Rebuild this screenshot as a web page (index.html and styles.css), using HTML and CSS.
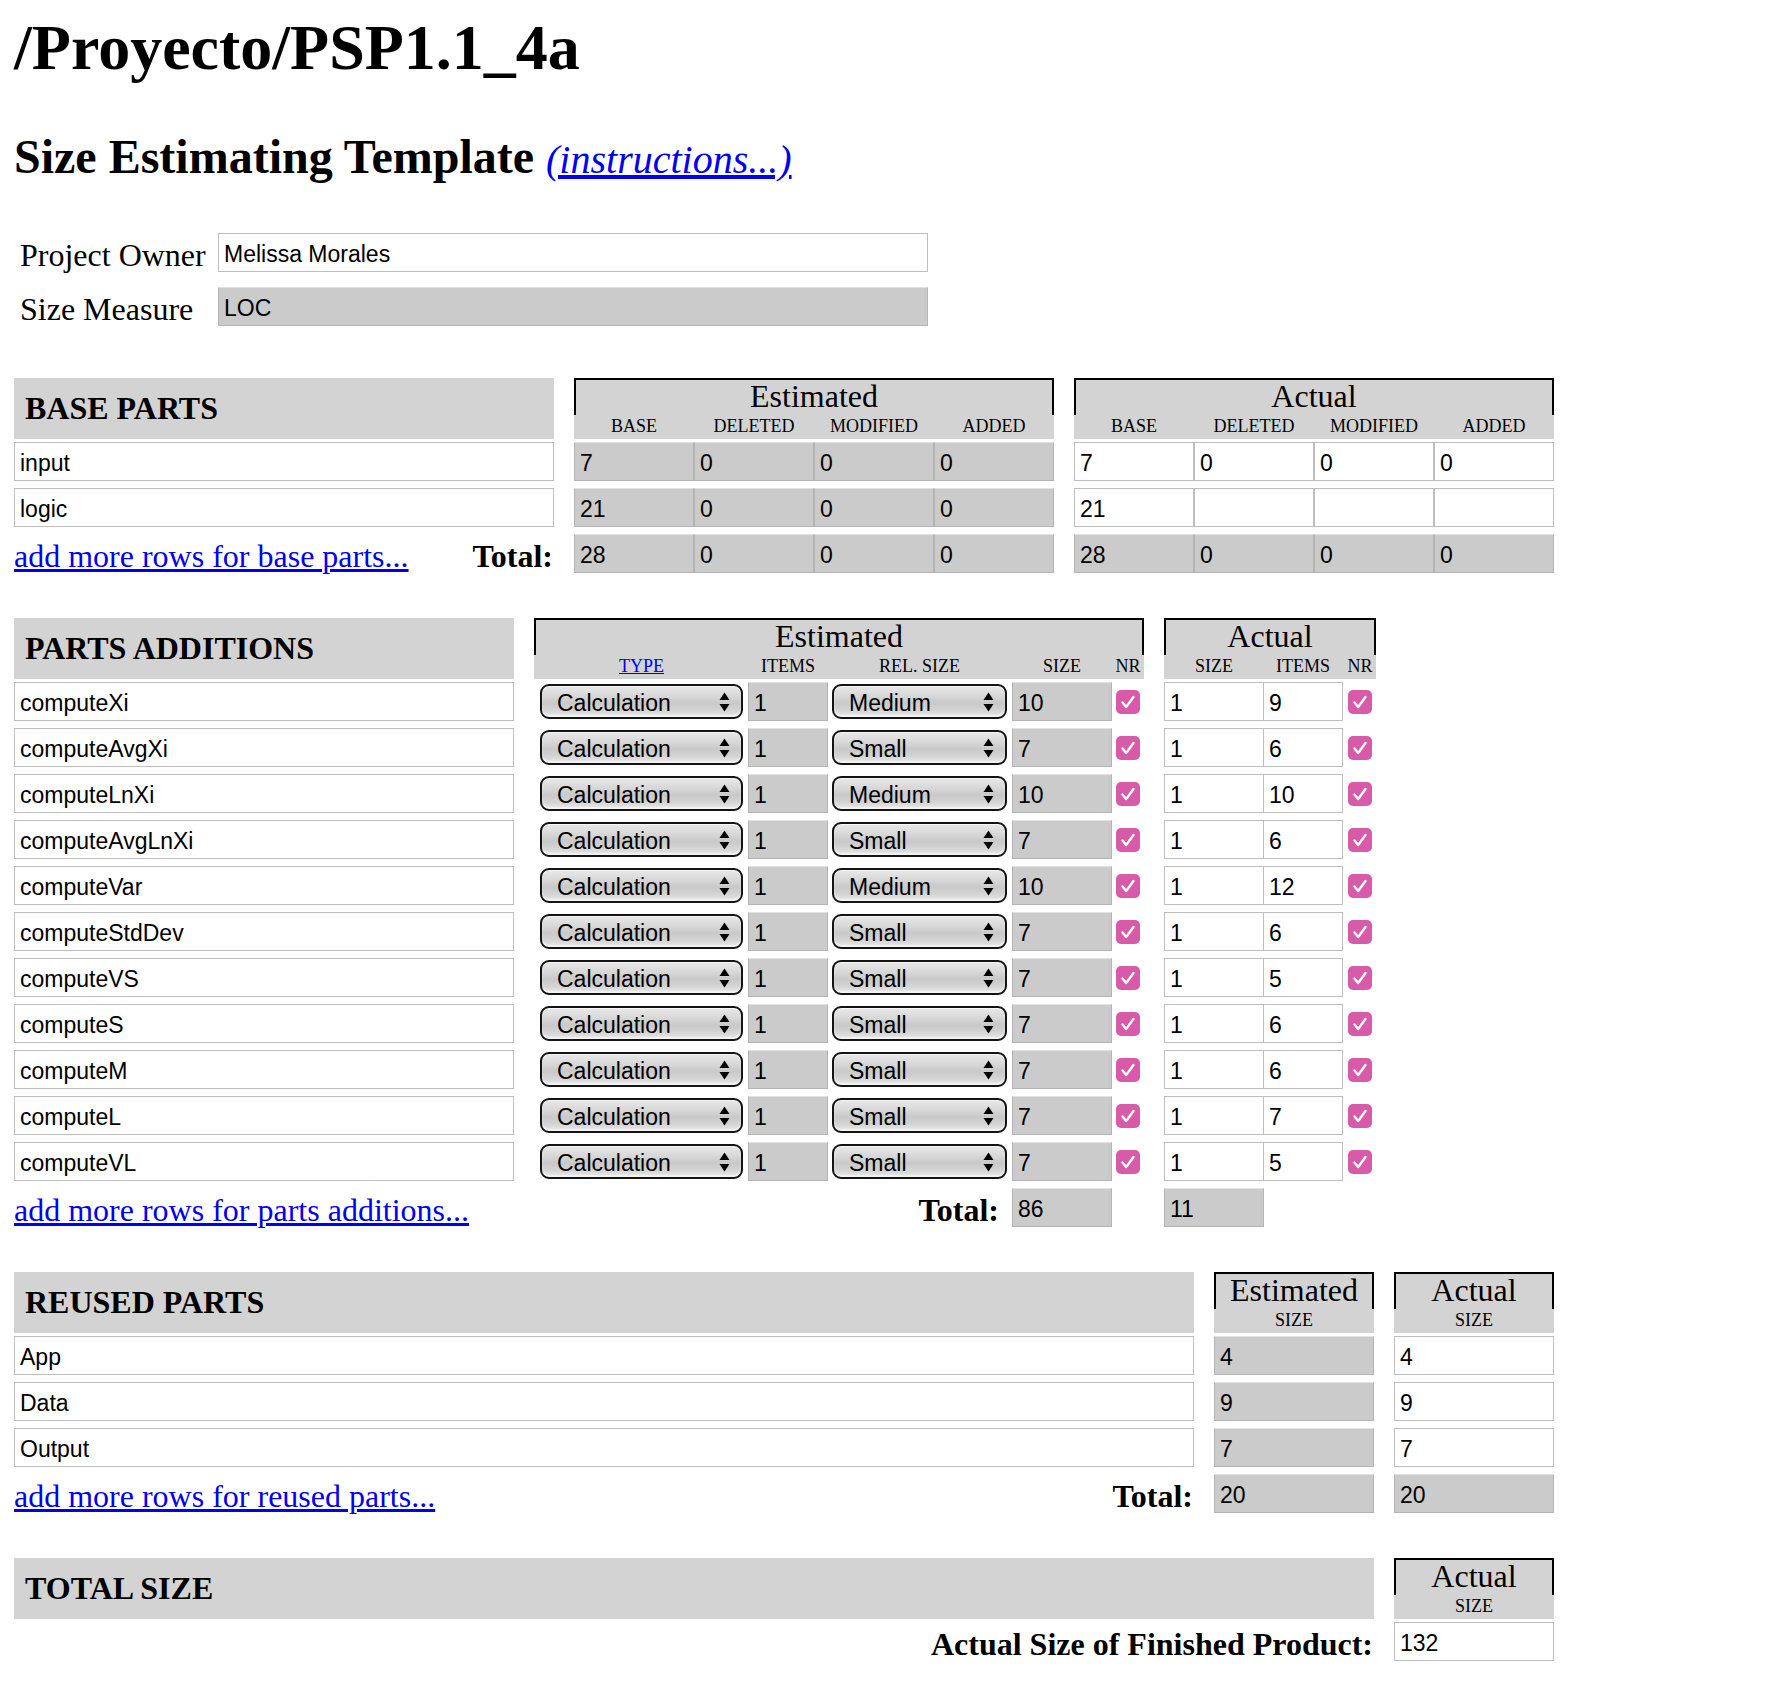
FILE: index.html
```html
<!DOCTYPE html>
<html>
<head>
<meta charset="utf-8">
<title>Size Estimating Template</title>
<link rel="stylesheet" href="styles.css">
</head>
<body>
<h1 class="title">/Proyecto/PSP1.1_4a</h1>
<h2 class="subtitle">Size Estimating Template <a href="#" class="instr">(instructions...)</a></h2>

<div class="owner">
  <div class="olabel">Project Owner</div><div class="inp">Melissa Morales</div>
  <div class="olabel">Size Measure</div><div class="inp ro">LOC</div>
</div>

<!-- BASE PARTS -->
<section class="sec first">
  <div class="hrow">
    <div class="sechead w-base">BASE PARTS</div>
    <div class="grp w480">
      <div class="gtitle">Estimated</div>
      <div class="gsub"><span class="c120">BASE</span><span class="c120">DELETED</span><span class="c120">MODIFIED</span><span class="c120">ADDED</span></div>
    </div>
    <div class="grp w480">
      <div class="gtitle">Actual</div>
      <div class="gsub"><span class="c120">BASE</span><span class="c120">DELETED</span><span class="c120">MODIFIED</span><span class="c120">ADDED</span></div>
    </div>
  </div>
  <div class="rows">
    <div class="drow">
      <div class="inp w-base">input</div>
      <div class="cells w480"><div class="inp ro c120">7</div><div class="inp ro c120">0</div><div class="inp ro c120">0</div><div class="inp ro c120">0</div></div>
      <div class="cells w480"><div class="inp c120">7</div><div class="inp c120">0</div><div class="inp c120">0</div><div class="inp c120">0</div></div>
    </div>
    <div class="drow">
      <div class="inp w-base">logic</div>
      <div class="cells w480"><div class="inp ro c120">21</div><div class="inp ro c120">0</div><div class="inp ro c120">0</div><div class="inp ro c120">0</div></div>
      <div class="cells w480"><div class="inp c120">21</div><div class="inp c120"></div><div class="inp c120"></div><div class="inp c120"></div></div>
    </div>
    <div class="drow">
      <div class="totlabel w-base"><a href="#">add more rows for base parts...</a><b>Total:</b></div>
      <div class="cells w480"><div class="inp ro c120">28</div><div class="inp ro c120">0</div><div class="inp ro c120">0</div><div class="inp ro c120">0</div></div>
      <div class="cells w480"><div class="inp ro c120">28</div><div class="inp ro c120">0</div><div class="inp ro c120">0</div><div class="inp ro c120">0</div></div>
    </div>
  </div>
</section>

<!-- PARTS ADDITIONS -->
<section class="sec">
  <div class="hrow">
    <div class="sechead w-add">PARTS ADDITIONS</div>
    <div class="grp w610">
      <div class="gtitle">Estimated</div>
      <div class="gsub pe"><span class="pe-type"><a href="#">TYPE</a></span><span class="pe-items">ITEMS</span><span class="pe-rel">REL. SIZE</span><span class="pe-size">SIZE</span><span class="pe-nr">NR</span></div>
    </div>
    <div class="grp w212">
      <div class="gtitle">Actual</div>
      <div class="gsub"><span class="pa-size">SIZE</span><span class="pa-items">ITEMS</span><span class="pa-nr">NR</span></div>
    </div>
  </div>
  <div class="rows">
    <div class="drow"><div class="inp w-add">computeXi</div>
      <div class="cells pe w610"><div class="sel pe-type"><span>Calculation</span><svg class="arr" viewBox="0 0 11 20"><path d="M0.5 8 L5.5 0.5 L10.5 8 Z M0.5 12 L5.5 19.5 L10.5 12 Z"/></svg></div><div class="inp ro pe-items">1</div><div class="sel pe-rel"><span>Medium</span><svg class="arr" viewBox="0 0 11 20"><path d="M0.5 8 L5.5 0.5 L10.5 8 Z M0.5 12 L5.5 19.5 L10.5 12 Z"/></svg></div><div class="inp ro pe-size">10</div><span class="chk pe-nr"><svg viewBox="0 0 24 24"><path d="M6.5 12.5 L10.2 17 L17.5 7"/></svg></span></div>
      <div class="cells w212"><div class="inp pa-size">1</div><div class="inp pa-items">9</div><span class="chk pa-nr"><svg viewBox="0 0 24 24"><path d="M6.5 12.5 L10.2 17 L17.5 7"/></svg></span></div>
    </div>
    <div class="drow"><div class="inp w-add">computeAvgXi</div>
      <div class="cells pe w610"><div class="sel pe-type"><span>Calculation</span><svg class="arr" viewBox="0 0 11 20"><path d="M0.5 8 L5.5 0.5 L10.5 8 Z M0.5 12 L5.5 19.5 L10.5 12 Z"/></svg></div><div class="inp ro pe-items">1</div><div class="sel pe-rel"><span>Small</span><svg class="arr" viewBox="0 0 11 20"><path d="M0.5 8 L5.5 0.5 L10.5 8 Z M0.5 12 L5.5 19.5 L10.5 12 Z"/></svg></div><div class="inp ro pe-size">7</div><span class="chk pe-nr"><svg viewBox="0 0 24 24"><path d="M6.5 12.5 L10.2 17 L17.5 7"/></svg></span></div>
      <div class="cells w212"><div class="inp pa-size">1</div><div class="inp pa-items">6</div><span class="chk pa-nr"><svg viewBox="0 0 24 24"><path d="M6.5 12.5 L10.2 17 L17.5 7"/></svg></span></div>
    </div>
    <div class="drow"><div class="inp w-add">computeLnXi</div>
      <div class="cells pe w610"><div class="sel pe-type"><span>Calculation</span><svg class="arr" viewBox="0 0 11 20"><path d="M0.5 8 L5.5 0.5 L10.5 8 Z M0.5 12 L5.5 19.5 L10.5 12 Z"/></svg></div><div class="inp ro pe-items">1</div><div class="sel pe-rel"><span>Medium</span><svg class="arr" viewBox="0 0 11 20"><path d="M0.5 8 L5.5 0.5 L10.5 8 Z M0.5 12 L5.5 19.5 L10.5 12 Z"/></svg></div><div class="inp ro pe-size">10</div><span class="chk pe-nr"><svg viewBox="0 0 24 24"><path d="M6.5 12.5 L10.2 17 L17.5 7"/></svg></span></div>
      <div class="cells w212"><div class="inp pa-size">1</div><div class="inp pa-items">10</div><span class="chk pa-nr"><svg viewBox="0 0 24 24"><path d="M6.5 12.5 L10.2 17 L17.5 7"/></svg></span></div>
    </div>
    <div class="drow"><div class="inp w-add">computeAvgLnXi</div>
      <div class="cells pe w610"><div class="sel pe-type"><span>Calculation</span><svg class="arr" viewBox="0 0 11 20"><path d="M0.5 8 L5.5 0.5 L10.5 8 Z M0.5 12 L5.5 19.5 L10.5 12 Z"/></svg></div><div class="inp ro pe-items">1</div><div class="sel pe-rel"><span>Small</span><svg class="arr" viewBox="0 0 11 20"><path d="M0.5 8 L5.5 0.5 L10.5 8 Z M0.5 12 L5.5 19.5 L10.5 12 Z"/></svg></div><div class="inp ro pe-size">7</div><span class="chk pe-nr"><svg viewBox="0 0 24 24"><path d="M6.5 12.5 L10.2 17 L17.5 7"/></svg></span></div>
      <div class="cells w212"><div class="inp pa-size">1</div><div class="inp pa-items">6</div><span class="chk pa-nr"><svg viewBox="0 0 24 24"><path d="M6.5 12.5 L10.2 17 L17.5 7"/></svg></span></div>
    </div>
    <div class="drow"><div class="inp w-add">computeVar</div>
      <div class="cells pe w610"><div class="sel pe-type"><span>Calculation</span><svg class="arr" viewBox="0 0 11 20"><path d="M0.5 8 L5.5 0.5 L10.5 8 Z M0.5 12 L5.5 19.5 L10.5 12 Z"/></svg></div><div class="inp ro pe-items">1</div><div class="sel pe-rel"><span>Medium</span><svg class="arr" viewBox="0 0 11 20"><path d="M0.5 8 L5.5 0.5 L10.5 8 Z M0.5 12 L5.5 19.5 L10.5 12 Z"/></svg></div><div class="inp ro pe-size">10</div><span class="chk pe-nr"><svg viewBox="0 0 24 24"><path d="M6.5 12.5 L10.2 17 L17.5 7"/></svg></span></div>
      <div class="cells w212"><div class="inp pa-size">1</div><div class="inp pa-items">12</div><span class="chk pa-nr"><svg viewBox="0 0 24 24"><path d="M6.5 12.5 L10.2 17 L17.5 7"/></svg></span></div>
    </div>
    <div class="drow"><div class="inp w-add">computeStdDev</div>
      <div class="cells pe w610"><div class="sel pe-type"><span>Calculation</span><svg class="arr" viewBox="0 0 11 20"><path d="M0.5 8 L5.5 0.5 L10.5 8 Z M0.5 12 L5.5 19.5 L10.5 12 Z"/></svg></div><div class="inp ro pe-items">1</div><div class="sel pe-rel"><span>Small</span><svg class="arr" viewBox="0 0 11 20"><path d="M0.5 8 L5.5 0.5 L10.5 8 Z M0.5 12 L5.5 19.5 L10.5 12 Z"/></svg></div><div class="inp ro pe-size">7</div><span class="chk pe-nr"><svg viewBox="0 0 24 24"><path d="M6.5 12.5 L10.2 17 L17.5 7"/></svg></span></div>
      <div class="cells w212"><div class="inp pa-size">1</div><div class="inp pa-items">6</div><span class="chk pa-nr"><svg viewBox="0 0 24 24"><path d="M6.5 12.5 L10.2 17 L17.5 7"/></svg></span></div>
    </div>
    <div class="drow"><div class="inp w-add">computeVS</div>
      <div class="cells pe w610"><div class="sel pe-type"><span>Calculation</span><svg class="arr" viewBox="0 0 11 20"><path d="M0.5 8 L5.5 0.5 L10.5 8 Z M0.5 12 L5.5 19.5 L10.5 12 Z"/></svg></div><div class="inp ro pe-items">1</div><div class="sel pe-rel"><span>Small</span><svg class="arr" viewBox="0 0 11 20"><path d="M0.5 8 L5.5 0.5 L10.5 8 Z M0.5 12 L5.5 19.5 L10.5 12 Z"/></svg></div><div class="inp ro pe-size">7</div><span class="chk pe-nr"><svg viewBox="0 0 24 24"><path d="M6.5 12.5 L10.2 17 L17.5 7"/></svg></span></div>
      <div class="cells w212"><div class="inp pa-size">1</div><div class="inp pa-items">5</div><span class="chk pa-nr"><svg viewBox="0 0 24 24"><path d="M6.5 12.5 L10.2 17 L17.5 7"/></svg></span></div>
    </div>
    <div class="drow"><div class="inp w-add">computeS</div>
      <div class="cells pe w610"><div class="sel pe-type"><span>Calculation</span><svg class="arr" viewBox="0 0 11 20"><path d="M0.5 8 L5.5 0.5 L10.5 8 Z M0.5 12 L5.5 19.5 L10.5 12 Z"/></svg></div><div class="inp ro pe-items">1</div><div class="sel pe-rel"><span>Small</span><svg class="arr" viewBox="0 0 11 20"><path d="M0.5 8 L5.5 0.5 L10.5 8 Z M0.5 12 L5.5 19.5 L10.5 12 Z"/></svg></div><div class="inp ro pe-size">7</div><span class="chk pe-nr"><svg viewBox="0 0 24 24"><path d="M6.5 12.5 L10.2 17 L17.5 7"/></svg></span></div>
      <div class="cells w212"><div class="inp pa-size">1</div><div class="inp pa-items">6</div><span class="chk pa-nr"><svg viewBox="0 0 24 24"><path d="M6.5 12.5 L10.2 17 L17.5 7"/></svg></span></div>
    </div>
    <div class="drow"><div class="inp w-add">computeM</div>
      <div class="cells pe w610"><div class="sel pe-type"><span>Calculation</span><svg class="arr" viewBox="0 0 11 20"><path d="M0.5 8 L5.5 0.5 L10.5 8 Z M0.5 12 L5.5 19.5 L10.5 12 Z"/></svg></div><div class="inp ro pe-items">1</div><div class="sel pe-rel"><span>Small</span><svg class="arr" viewBox="0 0 11 20"><path d="M0.5 8 L5.5 0.5 L10.5 8 Z M0.5 12 L5.5 19.5 L10.5 12 Z"/></svg></div><div class="inp ro pe-size">7</div><span class="chk pe-nr"><svg viewBox="0 0 24 24"><path d="M6.5 12.5 L10.2 17 L17.5 7"/></svg></span></div>
      <div class="cells w212"><div class="inp pa-size">1</div><div class="inp pa-items">6</div><span class="chk pa-nr"><svg viewBox="0 0 24 24"><path d="M6.5 12.5 L10.2 17 L17.5 7"/></svg></span></div>
    </div>
    <div class="drow"><div class="inp w-add">computeL</div>
      <div class="cells pe w610"><div class="sel pe-type"><span>Calculation</span><svg class="arr" viewBox="0 0 11 20"><path d="M0.5 8 L5.5 0.5 L10.5 8 Z M0.5 12 L5.5 19.5 L10.5 12 Z"/></svg></div><div class="inp ro pe-items">1</div><div class="sel pe-rel"><span>Small</span><svg class="arr" viewBox="0 0 11 20"><path d="M0.5 8 L5.5 0.5 L10.5 8 Z M0.5 12 L5.5 19.5 L10.5 12 Z"/></svg></div><div class="inp ro pe-size">7</div><span class="chk pe-nr"><svg viewBox="0 0 24 24"><path d="M6.5 12.5 L10.2 17 L17.5 7"/></svg></span></div>
      <div class="cells w212"><div class="inp pa-size">1</div><div class="inp pa-items">7</div><span class="chk pa-nr"><svg viewBox="0 0 24 24"><path d="M6.5 12.5 L10.2 17 L17.5 7"/></svg></span></div>
    </div>
    <div class="drow"><div class="inp w-add">computeVL</div>
      <div class="cells pe w610"><div class="sel pe-type"><span>Calculation</span><svg class="arr" viewBox="0 0 11 20"><path d="M0.5 8 L5.5 0.5 L10.5 8 Z M0.5 12 L5.5 19.5 L10.5 12 Z"/></svg></div><div class="inp ro pe-items">1</div><div class="sel pe-rel"><span>Small</span><svg class="arr" viewBox="0 0 11 20"><path d="M0.5 8 L5.5 0.5 L10.5 8 Z M0.5 12 L5.5 19.5 L10.5 12 Z"/></svg></div><div class="inp ro pe-size">7</div><span class="chk pe-nr"><svg viewBox="0 0 24 24"><path d="M6.5 12.5 L10.2 17 L17.5 7"/></svg></span></div>
      <div class="cells w212"><div class="inp pa-size">1</div><div class="inp pa-items">5</div><span class="chk pa-nr"><svg viewBox="0 0 24 24"><path d="M6.5 12.5 L10.2 17 L17.5 7"/></svg></span></div>
    </div>
    <div class="drow">
      <div class="totlabel w-add"><a href="#">add more rows for parts additions...</a></div>
      <div class="cells pe w610"><div class="totright pe-pre"><b>Total:</b></div><div class="inp ro pe-size">86</div></div>
      <div class="cells w212"><div class="inp ro pa-size">11</div></div>
    </div>
  </div>
</section>

<!-- REUSED PARTS -->
<section class="sec">
  <div class="hrow">
    <div class="sechead w-reu">REUSED PARTS</div>
    <div class="grp w160">
      <div class="gtitle">Estimated</div>
      <div class="gsub"><span class="c160">SIZE</span></div>
    </div>
    <div class="grp w160">
      <div class="gtitle">Actual</div>
      <div class="gsub"><span class="c160">SIZE</span></div>
    </div>
  </div>
  <div class="rows">
    <div class="drow"><div class="inp w-reu">App</div><div class="inp ro w160">4</div><div class="inp w160">4</div></div>
    <div class="drow"><div class="inp w-reu">Data</div><div class="inp ro w160">9</div><div class="inp w160">9</div></div>
    <div class="drow"><div class="inp w-reu">Output</div><div class="inp ro w160">7</div><div class="inp w160">7</div></div>
    <div class="drow">
      <div class="totlabel w-reu"><a href="#">add more rows for reused parts...</a><b>Total:</b></div>
      <div class="inp ro w160">20</div><div class="inp ro w160">20</div>
    </div>
  </div>
</section>

<!-- TOTAL SIZE -->
<section class="sec">
  <div class="hrow">
    <div class="sechead w-tot">TOTAL SIZE</div>
    <div class="grp w160">
      <div class="gtitle">Actual</div>
      <div class="gsub"><span class="c160">SIZE</span></div>
    </div>
  </div>
  <div class="rows">
    <div class="drow">
      <div class="totlabel w-tot end"><b>Actual Size of Finished Product:</b></div>
      <div class="inp w160">132</div>
    </div>
  </div>
</section>
</body>
</html>
```

FILE: styles.css
```css
* { box-sizing: border-box; }

body {
  margin: 0;
  padding: 0 14px 40px;
  font-family: "Liberation Serif", "Times New Roman", serif;
  font-size: 32px;
  color: #000;
  background: #fff;
}

a { color: #0000ee; text-decoration: underline; }

.title {
  margin: 0;
  padding-top: 16px;
  font-size: 64px;
  line-height: 64px;
  font-weight: bold;
}

.subtitle {
  margin: 53px 0 0;
  font-size: 48px;
  line-height: 48px;
  font-weight: bold;
}

.instr {
  font-size: 40px;
  font-style: italic;
  font-weight: normal;
}

/* owner table */
.owner {
  display: grid;
  grid-template-columns: 204px 710px;
  row-gap: 15px;
  margin-top: 49px;
}
.olabel {
  padding: 3px 0 0 6px;
  height: 39px;
  line-height: 39px;
  white-space: nowrap;
}

/* generic inputs */
.inp {
  height: 39px;
  border: 1px solid #bebebe;
  background: #fff;
  font-family: "Liberation Sans", Arial, sans-serif;
  font-size: 23px;
  line-height: 41px;
  padding: 0 5px;
  white-space: nowrap;
  overflow: hidden;
  flex: none;
}
.inp.ro {
  background: #cbcbcb;
  border-color: #b4b4b4;
  border-top-color: #e2e2e2;
}

/* sections */
.sec { margin-top: 45px; }
.sec.first { margin-top: 52px; }

.hrow, .drow {
  display: flex;
  column-gap: 20px;
}
.hrow { height: 61px; }

.rows {
  display: flex;
  flex-direction: column;
  row-gap: 7px;
  margin-top: 3px;
}
.drow { height: 39px; }

.sechead {
  background: #d3d3d3;
  font-weight: bold;
  font-size: 32px;
  padding-left: 11px;
  display: flex;
  align-items: center;
}

.w-base { width: 540px; }
.w-add { width: 500px; }
.w-reu { width: 1180px; }
.w-tot { width: 1360px; }
.w480 { width: 480px; }
.w610 { width: 610px; }
.w212 { width: 212px; }
.w160 { width: 160px; }
.c120 { width: 120px; }
.c160 { width: 160px; }

/* group headers */
.grp {
  display: flex;
  flex-direction: column;
  flex: none;
}
.gtitle {
  height: 37px;
  border: 2px solid #000;
  border-bottom: 0;
  background: #d3d3d3;
  text-align: center;
  font-size: 32px;
  line-height: 32px;
}
.gsub {
  height: 24px;
  background: #d3d3d3;
  display: flex;
  font-size: 18px;
  line-height: 18px;
  padding-top: 2px;
}
.gsub span {
  display: flex;
  justify-content: center;
  white-space: nowrap;
  flex: none;
}

/* cell groups */
.cells {
  display: flex;
  flex: none;
  align-items: center;
}

/* parts additions estimated layout */
.pe { padding-left: 6px; }
.pe-type { width: 203px; }
.pe-items { width: 80px; margin-left: 5px; }
.pe-rel { width: 175px; margin-left: 4px; }
.pe-size { width: 100px; margin-left: 5px; }
.pe-nr { width: 24px; margin-left: 4px; }
.pe-pre { width: 467px; }

.pa-size { width: 100px; }
.pa-items { width: 80px; margin-left: -1px; }
.pa-nr { width: 24px; margin-left: 5px; }

/* select boxes */
.sel {
  flex: none;
  height: 35px;
  border: 2px solid #141414;
  border-radius: 9px;
  background: linear-gradient(to bottom, #e9e9e9 0%, #d6d6d6 35%, #c9c9c9 55%, #d2d2d2 75%, #e6e6e6 100%);
  box-shadow: inset 0 1px 0 #f6f6f6, inset 0 -2px 2px rgba(255,255,255,0.6);
  display: flex;
  align-items: center;
  justify-content: space-between;
  padding: 0 11px 0 15px;
  font-family: "Liberation Sans", Arial, sans-serif;
  font-size: 23px;
  white-space: nowrap;
}
.sel span { position: relative; top: 2px; }
.sel .arr {
  width: 11px;
  height: 20px;
  fill: #000;
}

/* checkboxes */
.chk {
  flex: none;
  height: 24px;
  border-radius: 5px;
  background: #d75ba8;
  display: block;
}
.chk svg {
  display: block;
  width: 24px;
  height: 24px;
  fill: none;
  stroke: #fff;
  stroke-width: 2.4;
  stroke-linecap: round;
  stroke-linejoin: round;
}

/* totals */
.totlabel {
  display: flex;
  justify-content: space-between;
  align-items: baseline;
  padding-top: 3px;
  line-height: 39px;
  height: 39px;
  white-space: nowrap;
  flex: none;
}
.totlabel b { padding-right: 1px; }
.totlabel.end { justify-content: flex-end; }
.totright {
  text-align: right;
  padding: 3px 8px 0 0;
  line-height: 39px;
  height: 39px;
  white-space: nowrap;
  flex: none;
}
```
